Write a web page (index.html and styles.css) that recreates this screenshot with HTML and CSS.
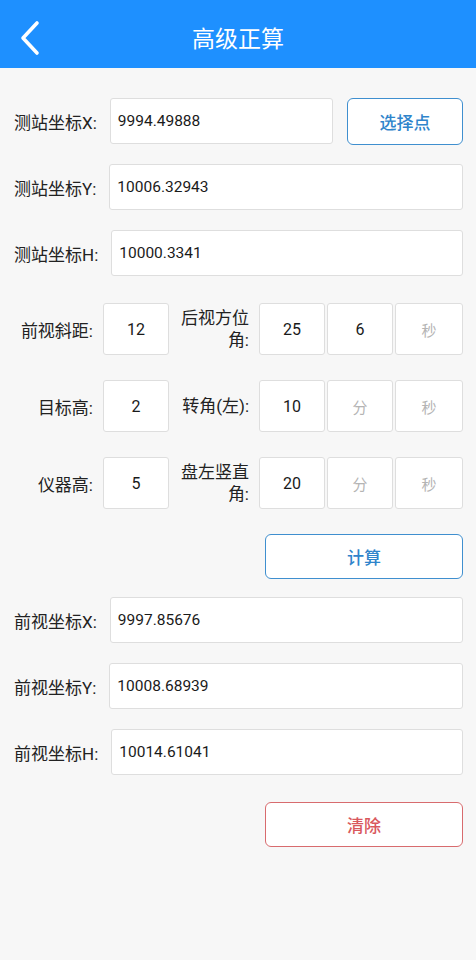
FILE: index.html
```html
<!DOCTYPE html>
<html lang="zh-CN">
<head>
    <meta charset="UTF-8">
    <meta name="viewport" content="width=device-width, initial-scale=1.0">
    <title>高级正算</title>
    <link rel="stylesheet" href="styles.css">
</head>
<body>
    <header class="topbar">
        <a class="back" href="#">
            <svg width="22" height="36" viewBox="0 0 22 36">
                <path d="M18 3 L4 18 L18 33" fill="none" stroke="#fff" stroke-width="3.6" stroke-linecap="round" stroke-linejoin="round"/>
            </svg>
        </a>
        <h1>高级正算</h1>
    </header>

    <main class="page">
        <!-- station coordinates -->
        <div class="row">
            <label>测站坐标X:</label>
            <div class="field">9994.49888</div>
            <button class="btn btn-blue btn-pick">选择点</button>
        </div>
        <div class="row">
            <label>测站坐标Y:</label>
            <div class="field">10006.32943</div>
        </div>
        <div class="row">
            <label>测站坐标H:</label>
            <div class="field">10000.3341</div>
        </div>

        <!-- observations -->
        <div class="obs">
            <div class="obs-row">
                <span class="obs-label">前视斜距:</span>
                <div class="cell">12</div>
                <span class="obs-label2">后视方位<br>角:</span>
                <div class="cells">
                    <div class="cell">25</div>
                    <div class="cell">6</div>
                    <div class="cell hint">秒</div>
                </div>
            </div>
            <div class="obs-row">
                <span class="obs-label">目标高:</span>
                <div class="cell">2</div>
                <span class="obs-label2">转角(左):</span>
                <div class="cells">
                    <div class="cell">10</div>
                    <div class="cell hint">分</div>
                    <div class="cell hint">秒</div>
                </div>
            </div>
            <div class="obs-row">
                <span class="obs-label">仪器高:</span>
                <div class="cell">5</div>
                <span class="obs-label2">盘左竖直<br>角:</span>
                <div class="cells">
                    <div class="cell">20</div>
                    <div class="cell hint">分</div>
                    <div class="cell hint">秒</div>
                </div>
            </div>
        </div>

        <div class="actions">
            <button class="btn btn-blue btn-wide">计算</button>
        </div>

        <!-- results -->
        <div class="results">
            <div class="row">
                <label>前视坐标X:</label>
                <div class="field">9997.85676</div>
            </div>
            <div class="row">
                <label>前视坐标Y:</label>
                <div class="field">10008.68939</div>
            </div>
            <div class="row">
                <label>前视坐标H:</label>
                <div class="field">10014.61041</div>
            </div>
        </div>

        <div class="actions actions-clear">
            <button class="btn btn-red btn-wide">清除</button>
        </div>
    </main>
</body>
</html>
```

FILE: styles.css
```css
* {
    margin: 0;
    padding: 0;
    box-sizing: border-box;
}

body {
    font-family: Roboto, "Noto Sans CJK SC", sans-serif;
    background: #f7f7f7;
    color: #222;
    width: 476px;
    min-height: 960px;
}

/* Top bar */
.topbar {
    height: 68px;
    background: #1e90ff;
    display: flex;
    align-items: center;
    justify-content: center;
    position: relative;
}

.back {
    position: absolute;
    left: 19px;
    top: 20px;
    display: block;
    width: 22px;
    height: 36px;
}

.topbar h1 {
    color: #fff;
    font-size: 23px;
    font-weight: normal;
    font-family: "Noto Sans CJK SC", sans-serif;
    margin-top: 6px;
}

/* Form */
.page {
    padding: 30px 13px 0 14px;
}

.row {
    display: flex;
    align-items: center;
    height: 46px;
    margin-bottom: 20px;
}

.row label {
    font-size: 17px;
    margin-right: 13px;
    white-space: nowrap;
}

.field {
    flex: 1;
    height: 46px;
    background: #fff;
    border: 1px solid #dedede;
    border-radius: 3px;
    padding-left: 7px;
    display: flex;
    align-items: center;
    font-size: 15.5px;
    color: #1a1a1a;
}

.btn {
    background: #fff;
    border-radius: 6px;
    font-family: "Noto Sans CJK SC", sans-serif;
    font-size: 17px;
    font-weight: 500;
    cursor: pointer;
}

.btn-blue {
    border: 1.5px solid #3f8fcf;
    color: #2f84cb;
}

.btn-red {
    border: 1.5px solid #d86b6e;
    color: #d9585d;
}

.btn-pick {
    width: 116px;
    height: 47px;
    margin-left: 14px;
}

/* Observation grid */
.obs {
    margin-top: 27px;
}

.obs-row {
    display: flex;
    align-items: center;
    height: 52px;
    margin-bottom: 25px;
}

.obs-row:last-child {
    margin-bottom: 0;
}

.obs-label {
    width: 79px;
    margin-right: 10px;
    text-align: right;
    font-size: 17px;
    white-space: nowrap;
}

.obs-label2 {
    width: 68px;
    margin: 0 10px 0 12px;
    text-align: right;
    font-size: 17px;
    line-height: 22px;
    white-space: nowrap;
}

.cells {
    display: flex;
    gap: 2px;
}

.cell {
    width: 66px;
    height: 52px;
    background: #fff;
    border: 1px solid #dedede;
    border-radius: 3px;
    display: flex;
    align-items: center;
    justify-content: center;
    font-size: 16px;
    color: #1a1a1a;
}

.cells .cell:last-child {
    width: 68px;
}

.cell.hint {
    color: #b4b4b4;
    font-family: "Noto Sans CJK SC", sans-serif;
    font-size: 15px;
}

/* Buttons row */
.actions {
    display: flex;
    justify-content: flex-end;
    margin-top: 25px;
}

.btn-wide {
    width: 198px;
    height: 45px;
}

.results {
    margin-top: 18px;
}

.results .row:last-child {
    margin-bottom: 0;
}

.actions-clear {
    margin-top: 27px;
}
```
